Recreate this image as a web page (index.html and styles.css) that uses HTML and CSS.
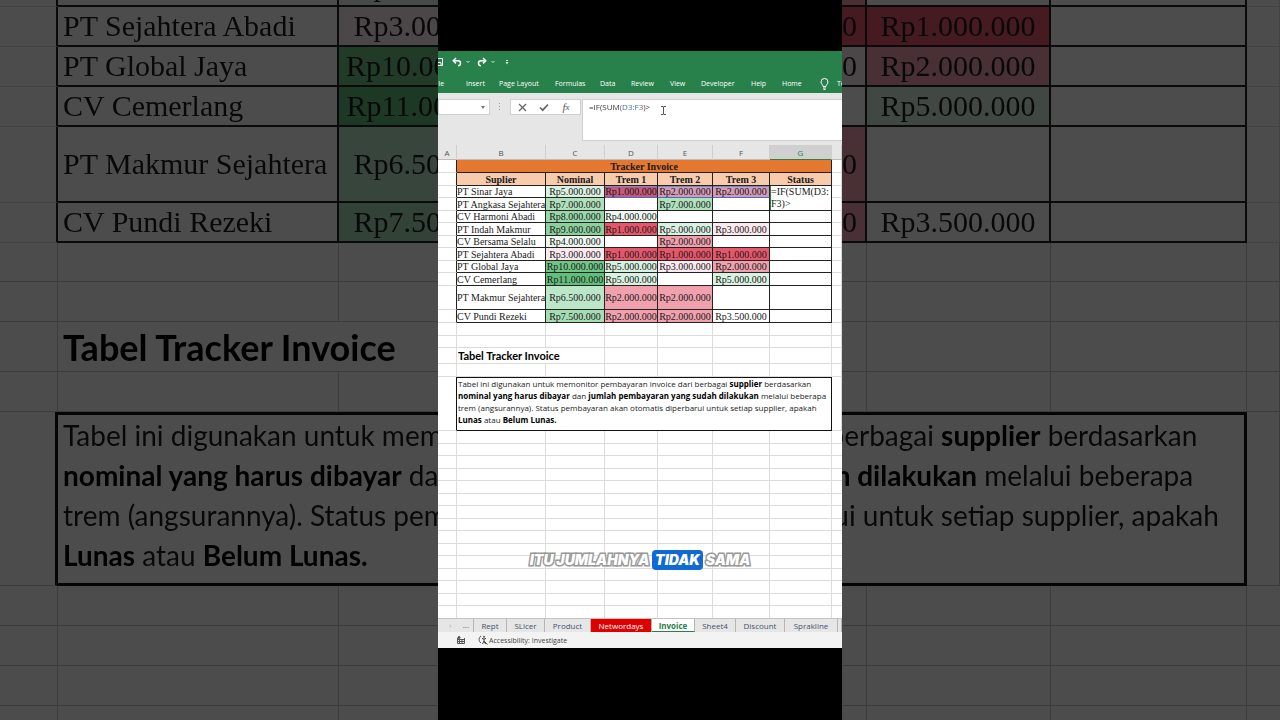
FILE: index.html
```html
<!DOCTYPE html>
<html lang="id">
<head>
    <meta charset="UTF-8">
    <meta name="viewport" content="width=device-width, initial-scale=1.0">
    <title>Tracker Invoice</title>
    <link rel="stylesheet" href="styles.css">
</head>
<body>
    <!-- Enlarged, dimmed copy of the sheet behind the video -->
    <div class="backdrop" aria-hidden="true">
        <table class="sheet sheet-large">
            <colgroup>
                <col class="col-a"><col class="col-b"><col class="col-c"><col class="col-d">
                <col class="col-e"><col class="col-f"><col class="col-g"><col class="col-h">
            </colgroup>
            <tbody class="invoice-rows" data-from="4"></tbody>
            <tbody class="note-rows"></tbody>
        </table>
        <div class="grid-fill"></div>
    </div>

    <main class="video">
        <div class="window">
            <header class="ribbon">
                <div class="quick">
                    <button class="icon-btn" aria-label="Save">
                        <svg width="7" height="10" viewBox="0 0 7 10" fill="none" stroke="#fff"><path d="M0 1.500h4.500v7H0M0 5.500h3v3"/></svg>
                    </button>
                    <button class="icon-btn" aria-label="Undo">
                        <svg width="10" height="10" viewBox="0 0 10 10" fill="none" stroke="#fff" stroke-width="1.500"><path d="M4 1L1.300 3.700 4 6.400M1.500 3.700H6a2.500 2.500 0 0 1 0 5"/></svg>
                    </button>
                    <svg class="caret" width="4" height="4" viewBox="0 0 4 4" fill="none" stroke="#d5e8da"><path d="M.5 1L2 2.500 3.500 1"/></svg>
                    <button class="icon-btn" aria-label="Redo">
                        <svg width="10" height="10" viewBox="0 0 10 10" fill="none" stroke="#fff" stroke-width="1.500"><path d="M6 1l2.700 2.700L6 6.400M8.500 3.700H4a2.500 2.500 0 0 0 0 5"/></svg>
                    </button>
                    <svg class="caret" width="4" height="4" viewBox="0 0 4 4" fill="none" stroke="#d5e8da"><path d="M.5 1L2 2.500 3.500 1"/></svg>
                    <svg class="more" width="4" height="5" viewBox="0 0 4 5" fill="#d5e8da"><path d="M1 0h2v1H1zM.5 2h3L2 4.500z"/></svg>
                </div>
                <nav class="menu">
                    <a href="#" class="file">File</a>
                    <a href="#">Insert</a>
                    <a href="#">Page Layout</a>
                    <a href="#">Formulas</a>
                    <a href="#">Data</a>
                    <a href="#">Review</a>
                    <a href="#">View</a>
                    <a href="#">Developer</a>
                    <a href="#">Help</a>
                    <a href="#">Home</a>
                    <svg width="9" height="12" viewBox="0 0 9 12" fill="none" stroke="#fff"><path d="M3 8.500C3 6.500 1 6 1 4a3.500 3.500 0 0 1 7 0c0 2-2 2.500-2 4.500zM3 10h3M3.500 11.500h2"/></svg>
                    <a href="#">Tell me</a>
                </nav>
            </header>

            <div class="formula-bar">
                <button class="name-box" aria-label="Name box">
                    <svg width="4" height="3" viewBox="0 0 4 3" fill="#777"><path d="M0 0h4L2 3z"/></svg>
                </button>
                <svg class="dots" width="2" height="8" viewBox="0 0 2 8" fill="#999"><path d="M0 0h1v1H0zM0 3h1v1H0zM0 6h1v1H0z"/></svg>
                <div class="formula-actions">
                    <button class="icon-btn" aria-label="Cancel">
                        <svg width="9" height="9" viewBox="0 0 9 9" fill="none" stroke="#666" stroke-width="1.300"><path d="M1 1l7 7M8 1L1 8"/></svg>
                    </button>
                    <button class="icon-btn" aria-label="Enter">
                        <svg width="10" height="9" viewBox="0 0 10 9" fill="none" stroke="#666" stroke-width="1.700"><path d="M1 4.500L3.700 7.200 9 1.500"/></svg>
                    </button>
                    <button class="icon-btn fx" aria-label="Insert function">f<sub>x</sub></button>
                </div>
                <div class="formula-box">
                    <textarea class="formula" aria-label="Formula" spellcheck="false">=IF(SUM(D3:F3)&gt;</textarea>
                    <svg class="ibeam" width="5" height="9" viewBox="0 0 5 9" fill="none" stroke="#555"><path d="M0 .5h2M3 .5h2M2.500 .5v8M0 8.500h2M3 8.500h2"/></svg>
                </div>
            </div>

            <table class="sheet sheet-small">
                <colgroup>
                    <col class="col-a"><col class="col-b"><col class="col-c"><col class="col-d">
                    <col class="col-e"><col class="col-f"><col class="col-g"><col class="col-h">
                </colgroup>
                <thead>
                    <tr class="letters">
                        <th>A</th><th>B</th><th>C</th><th>D</th><th>E</th><th>F</th><th class="current">G</th><th></th>
                    </tr>
                    <tr class="boxed title">
                        <td class="edge"></td><th colspan="6">Tracker Invoice</th><td class="outer"></td>
                    </tr>
                    <tr class="boxed heads">
                        <td class="edge"></td><th>Suplier</th><th>Nominal</th><th>Trem 1</th><th>Trem 2</th><th>Trem 3</th><th>Status</th><td class="outer"></td>
                    </tr>
                </thead>
                <tbody class="invoice-rows" data-from="0" data-editing="true"></tbody>
                <tbody class="note-rows"></tbody>
            </table>
            <div class="grid-fill"></div>

            <nav class="tabs">
                <span class="tab-nav"><i>›</i><b>...</b></span>
                <button>Rept</button>
                <button>SLicer</button>
                <button>Product</button>
                <button class="red">Networdays</button>
                <button class="active">Invoice</button>
                <button>Sheet4</button>
                <button>Discount</button>
                <button>Sprakline</button>
                <span></span>
            </nav>
            <footer class="status">
                <svg width="8" height="8" viewBox="0 0 8 8" fill="none" stroke="#555"><path d="M.5 2v5.500h7V2M0 3.500h8M0 5.500h8M2.500 3v4M5 3v4"/><circle cx="2" cy="1.500" r="1" fill="#333"/></svg>
                <svg width="10" height="10" viewBox="0 0 10 10" fill="none" stroke="#444"><path d="M3 1C.5 2.500 .5 6.500 3 8M4 3.500l2 .5 2-.5M6 4v2L4.500 9M6 6l1.500 3M6.500 6.500l3 3"/><circle cx="6" cy="1.800" r=".6"/></svg>
                <span>Accessibility: Investigate</span>
            </footer>
            <p class="caption">ITU JUMLAHNYA <mark>TIDAK</mark> SAMA</p>
        </div>
    </main>

    <script>
        // supplier, nominal, trem 1, trem 2, trem 3 (in thousands)
        const invoices = [
            ['PT Sinar Jaya', 5000, 1000, 2000, 2000],
            ['PT Angkasa Sejahtera', 7000, 0, 7000, 0],
            ['CV Harmoni Abadi', 8000, 4000, 0, 0],
            ['PT Indah Makmur', 9000, 1000, 5000, 3000],
            ['CV Bersama Selalu', 4000, 0, 2000, 0],
            ['PT Sejahtera Abadi', 3000, 1000, 1000, 1000],
            ['PT Global Jaya', 10000, 5000, 3000, 2000],
            ['CV Cemerlang', 11000, 5000, 0, 5000],
            ['PT Makmur Sejahtera', 6500, 2000, 2000, 0],
            ['CV Pundi Rezeki', 7500, 2000, 2000, 3500]
        ];

        function rupiah(value) {
            return 'Rp' + (value * 1000).toString().replace(/\B(?=(\d{3})+$)/g, '.');
        }

        function amountCell(value) {
            return value ? `<td class="amount v${value}">${rupiah(value)}</td>` : '<td></td>';
        }

        document.querySelectorAll('.invoice-rows').forEach((body) => {
            const editing = body.dataset.editing;
            const from = Number(body.dataset.from);
            body.innerHTML = invoices.slice(from).map(([name, ...amounts], i) => {
                // Trem 1 is always behind the video in the backdrop
                if (!editing) amounts[1] = 0;
                let status = '<td></td>';
                if (editing && i === 0) status = '<td class="editing" rowspan="2">=IF(SUM(D3:<br>F3)&gt;</td>';
                if (editing && i === 1) status = '';
                const classes = ['boxed'];
                if (editing && i === 0) classes.push('picked');
                if (name === 'PT Makmur Sejahtera') classes.push('tall');
                return `<tr class="${classes.join(' ')}">
                    <td class="edge"></td><td class="name">${name}</td>
                    ${amounts.map(amountCell).join('')}${status}<td class="outer"></td>
                </tr>`;
            }).join('');
        });

        const blankRow = `<tr class="blank">${'<td></td>'.repeat(8)}</tr>`;
        document.querySelectorAll('.note-rows').forEach((body) => {
            body.innerHTML = `${blankRow}${blankRow}
                <tr class="note-title"><td></td><td colspan="2">Tabel Tracker Invoice</td>${'<td></td>'.repeat(5)}</tr>
                ${blankRow}
                <tr class="note">
                    <td class="note-edge"></td>
                    <td class="note-box" colspan="6">Tabel ini digunakan untuk memonitor pembayaran invoice dari berbagai <b>supplier</b> berdasarkan<br>
                    <b>nominal yang harus dibayar</b> dan <b>jumlah pembayaran yang sudah dilakukan</b> melalui beberapa<br>
                    trem (angsurannya). Status pembayaran akan otomatis diperbarui untuk setiap supplier, apakah<br>
                    <b>Lunas</b> atau <b>Belum Lunas.</b></td>
                    <td></td>
                </tr>`;
        });
    </script>
</body>
</html>
```
FILE: styles.css
```css
* {
    margin: 0;
    padding: 0;
    box-sizing: border-box;
}

body {
    display: grid;
    grid-template-columns: minmax(0, 1fr);
    height: 100vh;
    overflow: hidden;
    background-color: #000;
    font-family: "Open Sans", "Noto Sans", sans-serif;
}

button {
    border: none;
    background: none;
    font: inherit;
    color: inherit;
    cursor: pointer;
}

a {
    color: inherit;
    text-decoration: none;
}

svg {
    display: block;
}

.backdrop,
.video {
    grid-area: 1 / 1;
    min-height: 0;
    overflow: hidden;
}

.backdrop {
    display: flex;
    flex-direction: column;
    background-color: #fff;
    filter: brightness(0.3);
}

.video {
    position: relative;
    z-index: 1;
    justify-self: center;
    width: 404px;
    padding-top: 51px;
    background-color: #000;
}

.window {
    position: relative;
    background-color: #fff;
    overflow: hidden;
}

/* Ribbon */
.ribbon {
    background-color: #28814a;
    color: #fff;
    overflow: hidden;
}

.quick {
    display: flex;
    align-items: center;
    height: 22px;
}

.icon-btn {
    display: flex;
    align-items: center;
    justify-content: center;
}

.quick .icon-btn {
    margin-right: 4px;
}

.quick .icon-btn:first-child {
    margin-right: 7px;
}

.quick .caret {
    margin-right: 7px;
}

.quick .more {
    margin-left: 3px;
}

.menu {
    display: grid;
    grid-template-columns: 28px 33px 56px 45px 31px 39px 31px 50px 31px 38px 17px 40px;
    align-items: center;
    height: 20px;
    padding-top: 1px;
    font-size: 7px;
    line-height: 12px;
    white-space: nowrap;
}

.menu .file {
    margin-left: -5px;
}

/* Formula bar */
.formula-bar {
    display: flex;
    align-items: flex-start;
    height: 52px;
    padding-top: 6px;
    background-color: #e6e6e6;
}

.name-box {
    display: flex;
    align-items: center;
    justify-content: flex-end;
    width: 52px;
    height: 16px;
    padding-right: 4px;
    background-color: #fff;
    border: 1px solid #d0d0d0;
}

.dots {
    margin: 4px 9px 0 9px;
}

.formula-actions {
    display: grid;
    grid-template-columns: repeat(3, 1fr);
    width: 71px;
    height: 16px;
    padding-right: 3px;
    background-color: #fff;
    border: 1px solid #d0d0d0;
}

.fx {
    font: italic 11px "Liberation Serif", serif;
    color: #555;
}

.fx sub {
    font-size: 9px;
}

.formula-box {
    position: relative;
    flex: 1;
    height: 42px;
    margin-left: 1px;
    background-color: #fff;
    border: 1px solid #d0d0d0;
    border-right: none;
}

/* The referenced range is tinted like its outline on the sheet */
.formula {
    display: block;
    width: 100%;
    height: 40px;
    padding: 1px 6px;
    border: none;
    outline: none;
    resize: none;
    overflow: hidden;
    font: 8px/12px "Open Sans", sans-serif;
    color: transparent;
    background: linear-gradient(90deg, #333 37px, #a04040 37px 39px, #2f6fae 39px 58px, #a04040 58px 61px, #333 61px);
    background-clip: text;
    -webkit-background-clip: text;
}

.ibeam {
    position: absolute;
    left: 78px;
    top: 6px;
}

/* Sheet */
.sheet {
    width: 100%;
    table-layout: fixed;
    border-collapse: separate;
    border-spacing: 0;
    font-family: "Liberation Serif", serif;
    color: #1a1a1a;
    white-space: nowrap;
}

.sheet th,
.sheet td {
    border-right: 1px solid #dcdcdc;
    border-bottom: 1px solid #dcdcdc;
    overflow: hidden;
}

.sheet .boxed > * {
    border-color: #222;
}

.sheet .boxed > .edge {
    border-bottom-color: #dcdcdc;
}

.sheet .boxed > .outer {
    border-color: #dcdcdc;
}

.sheet .amount {
    text-align: center;
}

.v1000 { background-color: #e5576a; }
.v2000 { background-color: #f1a1ae; }
.v3000 { background-color: #fbe9f0; }
.v4000 { background-color: #eef8f1; }
.v5000 { background-color: #d9f1e0; }
.v6500 { background-color: #bce6c8; }
.v7000 { background-color: #afe1bd; }
.v7500 { background-color: #a5dcb4; }
.v8000 { background-color: #99d7aa; }
.v9000 { background-color: #8bd19e; }
.v10000 { background-color: #70c587; }
.v11000 { background-color: #62bf7b; }

.sheet .v3500 {
    background-color: #fff;
}

.sheet-small {
    font-size: 10px;
    line-height: 11px;
}

.sheet-small .col-a { width: 19px; }
.sheet-small .col-b { width: 89px; }
.sheet-small .col-c { width: 59px; }
.sheet-small .col-d { width: 53px; }
.sheet-small .col-e { width: 55px; }
.sheet-small .col-f { width: 57px; }
.sheet-small .col-g { width: 62px; }

.sheet-small tr { height: 12px; }
.sheet-small .boxed:nth-child(even),
.sheet-small .title,
.sheet-small .heads,
.sheet-small .blank { height: 13px; }
.sheet-small .blank:nth-child(2) { height: 12px; }
.sheet-small .tall { height: 24px; }

.sheet-small .letters {
    height: 15px;
    font: 8px/13px "Open Sans", sans-serif;
    color: #555;
    background-color: #e6e6e6;
}

.letters th {
    font-weight: normal;
}

.sheet .letters th {
    border-right-color: #cfcfcf;
    border-bottom-color: #bbb;
}

.sheet .letters .current {
    color: #28814a;
    background-color: #d0d0d0;
    border-bottom-color: #28814a;
}

.title th {
    background-color: #e47831;
}

.heads th {
    background-color: #f7cbac;
}

.picked .v1000 {
    background-color: #c9587a;
}

.picked .v2000 {
    background-color: #d69ab6;
}

.sheet .picked td.amount:not(.v5000) {
    border-bottom-color: #4a6fb5;
    box-shadow: inset 0 1px #6f8fc8;
}

.sheet td.editing {
    padding-left: 1px;
    background-color: #fff;
    vertical-align: top;
    line-height: 12px;
    box-shadow: inset 1px 0 #28814a;
}

.note-title td {
    font-weight: bold;
    color: #000;
}

.sheet .note-edge {
    border-right-color: #111;
}

.sheet .note-box {
    border: 1px solid #111;
    border-left: none;
    vertical-align: top;
}

.note b {
    color: #000;
}

.sheet-small .note-title {
    height: 16px;
    font: 11px/14px Lato, sans-serif;
}

.sheet-small .note-title td,
.sheet-small .note-box {
    padding-left: 1px;
}

.sheet-small .note {
    height: 54px;
    font: 8px/12px "Open Sans", sans-serif;
}

/* Empty rows under the note */
.grid-fill {
    background-image:
        linear-gradient(90deg, transparent 18px, #dcdcdc 18px 19px, transparent 19px 107px, #dcdcdc 107px 108px, transparent 108px 166px, #dcdcdc 166px 167px, transparent 167px 219px, #dcdcdc 219px 220px, transparent 220px 274px, #dcdcdc 274px 275px, transparent 275px 331px, #dcdcdc 331px 332px, transparent 332px 393px, #dcdcdc 393px 394px, transparent 394px),
        repeating-linear-gradient(transparent 0 12px, #dcdcdc 12px 13px, transparent 13px 24px, #dcdcdc 24px 25px);
    height: 187px;
}

/* Backdrop sheet, the first row is cut by the top edge */
.sheet-large {
    margin-top: -33px;
    font-size: 30px;
    line-height: 38px;
}

.sheet-large .col-a { width: 58px; }
.sheet-large .col-b { width: 281px; }
.sheet-large .col-c { width: 186px; }
.sheet-large .col-d { width: 169px; }
.sheet-large .col-e { width: 173px; }
.sheet-large .col-f { width: 184px; }
.sheet-large .col-g { width: 196px; }

.sheet-large tr { height: 40px; }
.sheet-large .tall { height: 76px; }
.sheet-large .blank:first-child { height: 39px; }

.sheet-large td {
    border-color: #c8c8c8;
}

.sheet-large .edge,
.sheet-large .boxed td:not(.outer) {
    border-right-width: 2px;
}

.sheet-large .boxed td:not(.edge):not(.outer) {
    border-bottom-width: 2px;
}

.sheet-large .name,
.sheet-large .note-title td,
.sheet-large .note-box {
    padding-left: 5px;
}

.sheet-large .note-title {
    height: 50px;
    font: 36px/44px Lato, sans-serif;
}

.sheet-large .note {
    height: 174px;
    font: 28px/40px Lato, sans-serif;
}

.sheet-large .note-edge,
.sheet-large .note-box {
    border-right-width: 3px;
}

.sheet-large .note-box {
    border-top-width: 3px;
    border-bottom-width: 3px;
}

.backdrop .grid-fill {
    flex: 1;
    background-image:
        linear-gradient(90deg, transparent 57px, #c8c8c8 57px 58px, transparent 58px 338px, #c8c8c8 338px 339px, transparent 339px 866px, #c8c8c8 866px 867px, transparent 867px 1050px, #c8c8c8 1050px 1051px, transparent 1051px 1246px, #c8c8c8 1246px 1247px, transparent 1247px),
        repeating-linear-gradient(transparent 0 39px, #c8c8c8 39px 40px);
}

/* Sheet tabs */
.tabs {
    display: grid;
    grid-template-columns: 36px 33px 38px 46px 61px 43px 41px 49px 53px 1fr;
    height: 14px;
    background-color: #e6e6e6;
    border-top: 1px solid #c4c4c4;
    font-size: 8px;
    line-height: 11px;
    color: #44546a;
}

.tabs > * {
    border-right: 1px solid #b5b5b5;
    white-space: nowrap;
}

.tab-nav {
    display: flex;
    justify-content: space-between;
    padding: 0 4px 0 11px;
}

.tab-nav i {
    font-style: normal;
    color: #aaa;
}

.tab-nav b {
    font-weight: normal;
}

.tabs .red {
    background-color: #e00000;
    color: #fff;
}

.tabs .active {
    background-color: #fff;
    border-bottom: 1px solid #28814a;
    color: #28814a;
    font-weight: bold;
}

.status {
    display: flex;
    align-items: center;
    height: 16px;
    padding-left: 19px;
    background-color: #f3f3f3;
    font-size: 7px;
    color: #444;
}

.status svg:nth-child(2) {
    margin: 0 1px 0 13px;
}

.caption {
    position: absolute;
    left: 0;
    right: 0;
    bottom: 78px;
    text-align: center;
    font: italic 900 14px/20px Inter, sans-serif;
    color: #fff;
    -webkit-text-stroke: 3px #999;
    paint-order: stroke fill;
}

.caption mark {
    display: inline-block;
    padding: 0 3px;
    border-radius: 4px;
    background-color: #0f6ad6;
    color: #fff;
    -webkit-text-stroke-width: 0;
}
```
